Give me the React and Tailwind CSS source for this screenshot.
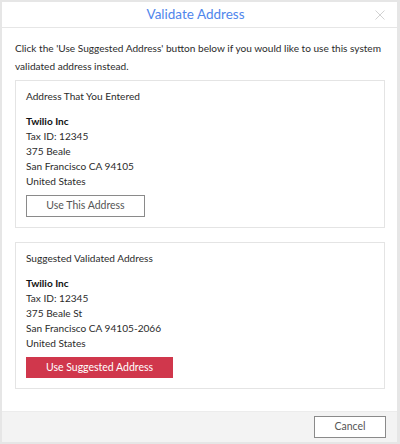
import React from "react";

function AddressCard({ title, lines, children }) {
  return (
    <div className="border border-[#e4e4e4] bg-white px-[10px] pt-[8px] pb-[10px]">
      <h3 className="text-[10.1px] leading-[15px] text-[#2b2b2b]">{title}</h3>
      <div className="mt-[10px] text-[10.1px] leading-[15px] text-[#2b2b2b]">
        <p className="font-bold text-[#111]">Twilio Inc</p>
        {lines.map((line) => (
          <p key={line}>{line}</p>
        ))}
      </div>
      <div className="mt-[6px] flex">{children}</div>
    </div>
  );
}

function App() {
  return (
    <div
      className="w-[400px] h-[444px] bg-[#e6e6e6] pt-[2px] pl-[2px] pr-[3px] pb-[2px]"
      style={{ fontFamily: "Lato, 'Open Sans', sans-serif" }}
    >
      <div className="flex flex-col h-full bg-white">
        <div className="relative h-[26px] flex items-center justify-center pr-[8px] border-b border-[#e6e6e6]">
          <h2 className="text-[13.5px] text-[#4f86ec]">Validate Address</h2>
          <button type="button" className="absolute right-[12px] top-[8px]">
            <svg width="10" height="10" viewBox="0 0 10 10">
              <path d="M0.5,0.5 9.5,9.5 M9.5,0.5 0.5,9.5" stroke="#d2d2d2" strokeWidth="1" fill="none" />
            </svg>
          </button>
        </div>
        <div className="flex-1 pl-[13px] pr-[12px] pt-[11px]">
          <p className="text-[10.1px] leading-[18px] text-[#2b2b2b]">
            Click the 'Use Suggested Address' button below if you would like to use this system
            validated address instead.
          </p>
          <div className="mt-[5px] flex flex-col gap-[14px]">
            <AddressCard
              title="Address That You Entered"
              lines={["Tax ID: 12345", "375 Beale", "San Francisco CA 94105", "United States"]}
            >
              <button
                type="button"
                className="w-[119px] h-[22px] border border-[#8a8a8a] text-[10.5px] text-[#555]"
              >
                Use This Address
              </button>
            </AddressCard>
            <AddressCard
              title="Suggested Validated Address"
              lines={["Tax ID: 12345", "375 Beale St", "San Francisco CA 94105-2066", "United States"]}
            >
              <button
                type="button"
                className="w-[147px] h-[21px] bg-[#d0374c] text-[10.5px] text-white"
              >
                Use Suggested Address
              </button>
            </AddressCard>
          </div>
        </div>
        <div className="h-[31px] bg-[#f3f3f3] border-t border-[#ececec] flex items-center justify-end pr-[11px]">
          <button
            type="button"
            className="w-[72px] h-[22px] border border-[#8a8a8a] bg-white text-[10.5px] text-[#555]"
          >
            Cancel
          </button>
        </div>
      </div>
    </div>
  );
}

export default App;
